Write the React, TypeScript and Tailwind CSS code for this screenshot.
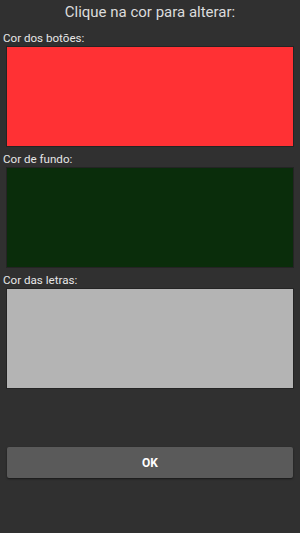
import React from "react";

function Swatch({ label, color }: { label: string; color: string }) {
  return (
    <div className="flex flex-col">
      <div className="px-[3px] text-[11.6px] leading-[16px] h-[16px] text-[#e6e6e6]">{label}</div>
      <div className="mx-[6px] h-[101px] border border-[#242424]" style={{ backgroundColor: color }} />
    </div>
  );
}

export default function App() {
  return (
    <div
      className="w-[300px] h-[533px] bg-[#303030] flex flex-col"
      style={{ fontFamily: "Roboto, 'Noto Sans', sans-serif" }}
    >
      <div className="h-[30px] pt-[2px] text-center text-[15px] leading-[20px] text-[#dcdcdc]">
        Clique na cor para alterar:
      </div>
      <div className="flex flex-col gap-[4px]">
        <Swatch label="Cor dos botões:" color="#ff3134" />
        <Swatch label="Cor de fundo:" color="#0a2d0b" />
        <Swatch label="Cor das letras:" color="#b4b4b4" />
      </div>
      <div className="mt-[58px] mx-[7px] h-[31px] rounded-[2px] bg-[#5a5a5a] shadow-[0_1px_2px_rgba(0,0,0,0.5)] flex items-center justify-center text-[12px] font-bold text-white">
        OK
      </div>
    </div>
  );
}
